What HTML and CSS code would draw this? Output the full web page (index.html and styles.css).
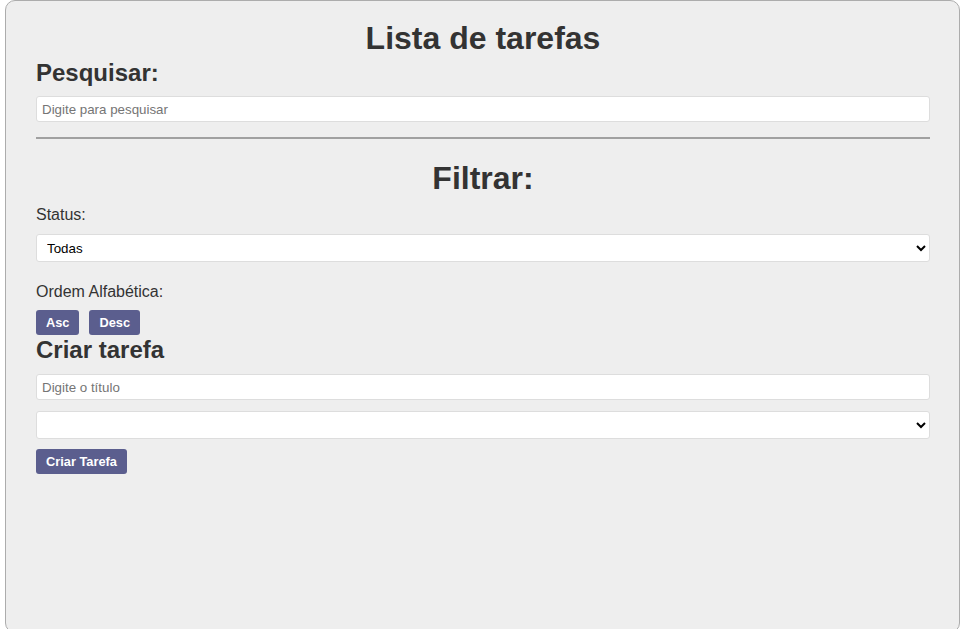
FILE: index.html
```html
<!DOCTYPE html>
<html lang="pt-BR">
<head>
<meta charset="utf-8">
<title>Lista de tarefas</title>
<link rel="stylesheet" href="styles.css">
</head>
<body>
<main class="container">
  <h1 class="title">Lista de tarefas</h1>
  <section class="search">
    <h2 class="subtitle subtitle-search">Pesquisar:</h2>
    <input class="field" type="text" placeholder="Digite para pesquisar">
  </section>
  <hr class="divider">
  <section class="filter">
    <h1 class="title title-filter">Filtrar:</h1>
    <label class="label label-status">Status:</label>
    <select class="field select select-status">
      <option>Todas</option>
    </select>
    <label class="label label-order">Ordem Alfabética:</label>
    <div class="btn-row">
      <button class="btn">Asc</button>
      <button class="btn">Desc</button>
    </div>
  </section>
  <section class="create">
    <h2 class="subtitle subtitle-create">Criar tarefa</h2>
    <input class="field field-title" type="text" placeholder="Digite o título">
    <select class="field select select-create">
      <option></option>
    </select>
    <div class="btn-row btn-row-create">
      <button class="btn">Criar Tarefa</button>
    </div>
  </section>
</main>
</body>
</html>
```

FILE: styles.css
```css
html, body {
  margin: 0;
  padding: 0;
  background: #ffffff;
  overflow: hidden;
}

body {
  font-family: "Liberation Sans", Arial, sans-serif;
  color: #333333;
}

.container {
  box-sizing: border-box;
  width: 955px;
  height: 633px;
  margin: 0 auto;
  padding: 19px 29px 0 30px;
  background: #eeeeee;
  border: 1px solid #acacac;
  border-radius: 10px;
  display: flex;
  flex-direction: column;
}

.search,
.filter,
.create {
  display: flex;
  flex-direction: column;
}

.title {
  margin: 0;
  font-size: 32px;
  line-height: 37px;
  font-weight: bold;
  text-align: center;
  color: #333333;
}

.title-filter {
  margin-top: 21px;
}

.subtitle {
  margin: 0;
  font-size: 24px;
  line-height: 28px;
  font-weight: bold;
  color: #333333;
}

.subtitle-search {
  margin-top: 2px;
  margin-bottom: 9px;
}

.subtitle-create {
  margin-top: 1px;
  margin-bottom: 10px;
}

.field {
  box-sizing: border-box;
  width: 100%;
  height: 26px;
  margin: 0;
  padding: 0 5px;
  font-family: "Liberation Sans", Arial, sans-serif;
  font-size: 13.333px;
  color: #000000;
  background: #ffffff;
  border: 1px solid #dddddd;
  border-radius: 3px;
  outline: none;
}

.field::placeholder {
  color: #757575;
}

.select {
  height: 28px;
  padding: 0 5px 0 6px;
}

.divider {
  margin: 15px 0 0;
  height: 2px;
  border: none;
  background: #a0a0a0;
}

.label {
  display: block;
  font-size: 16px;
  line-height: 18px;
  color: #333333;
}

.label-status {
  margin-top: 9px;
  margin-bottom: 10px;
}

.label-order {
  margin-top: 21px;
  margin-bottom: 9px;
}

.select-create {
  margin-top: 11px;
}

.btn-row {
  display: flex;
  gap: 10px;
}

.btn-row-create {
  margin-top: 10px;
}

.btn {
  box-sizing: border-box;
  height: 25px;
  margin: 0;
  padding: 0 10px;
  font-family: "Liberation Sans", Arial, sans-serif;
  font-size: 12.8px;
  font-weight: bold;
  color: #ffffff;
  background: #5b5e8e;
  border: none;
  border-radius: 3px;
  cursor: pointer;
}
```
